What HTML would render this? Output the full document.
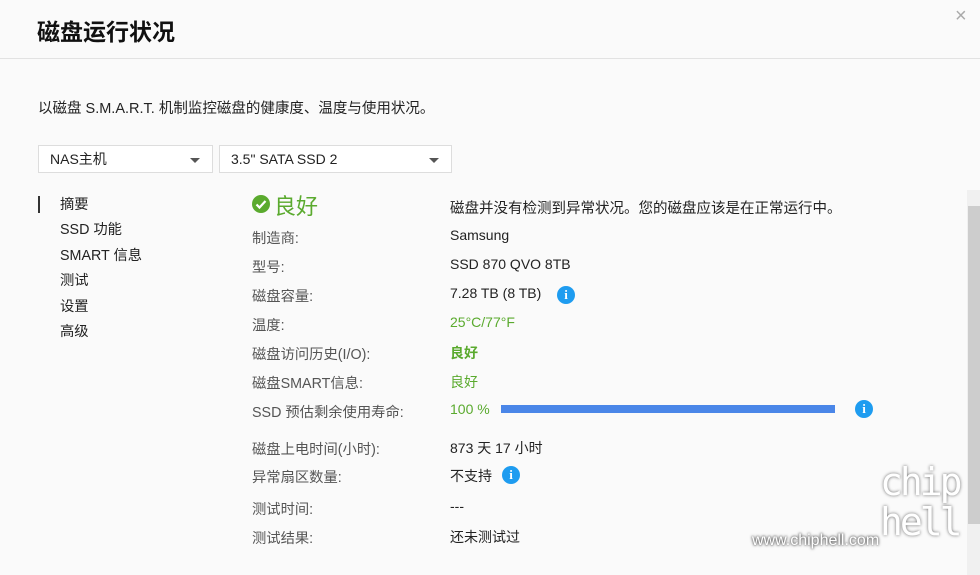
<!DOCTYPE html><html><head><meta charset="utf-8"><style>
body{margin:0;width:980px;height:575px;background:#fafafa;font-family:"Liberation Sans","Noto Sans CJK SC",sans-serif;position:relative;overflow:hidden;color:#222}
.a{position:absolute;white-space:nowrap}
.l{left:252px;font-size:14.3px;color:#555}
.v{left:450px;font-size:14px;color:#222}
.g{color:#5aaa2e}
.i{position:absolute;width:18px;height:18px;border-radius:50%;background:#1e9cf0;color:#fff;font:bold 13px/18px "Liberation Serif",serif;text-align:center}
.sel{position:absolute;top:145px;height:28px;background:#fff;border:1px solid #ddd;box-sizing:border-box;font-size:14px;line-height:27px;padding-left:11px}
.sel:after{content:"";position:absolute;right:12px;top:12px;border:5px solid transparent;border-top:5px solid #555;border-bottom:0}
.n{left:60px;font-size:14.3px;line-height:20px}
</style></head><body>
<div class="a" style="left:37px;top:13px;font-size:23px;font-weight:bold;color:#111">磁盘运行状况</div>
<div class="a" style="left:955px;top:5px;font-size:20px;color:#aaa">×</div>
<div class="a" style="left:0;top:58px;width:980px;height:1px;background:#e2e2e2"></div>
<div class="a" style="left:38px;top:97px;font-size:14.5px">以磁盘 S.M.A.R.T. 机制监控磁盘的健康度、温度与使用状况。</div>
<div class="sel" style="left:38px;width:175px">NAS主机</div>
<div class="sel" style="left:219px;width:233px">3.5" SATA SSD 2</div>
<div class="a" style="left:38px;top:196px;width:2px;height:17px;background:#333"></div>
<div class="a n" style="top:195px">摘要</div>
<div class="a n" style="top:220px">SSD 功能</div>
<div class="a n" style="top:246px">SMART 信息</div>
<div class="a n" style="top:271px">测试</div>
<div class="a n" style="top:297px">设置</div>
<div class="a n" style="top:322px">高级</div>
<div class="a" style="left:252px;top:195px;width:18px;height:18px;border-radius:50%;background:#5aaa2e"></div>
<svg class="a" style="left:252px;top:195px" width="18" height="18"><path d="M4.5 9.5l3 3 6-6.5" stroke="#fff" stroke-width="2.2" fill="none"/></svg>
<div class="a g" style="left:274px;top:189px;font-size:22px">良好</div>
<div class="a v" style="top:197px;font-size:14.5px">磁盘并没有检测到异常状况。您的磁盘应该是在正常运行中。</div>
<div class="a l" style="top:227px">制造商:</div><div class="a v" style="top:227px">Samsung</div>
<div class="a l" style="top:256px">型号:</div><div class="a v" style="top:256px">SSD 870 QVO 8TB</div>
<div class="a l" style="top:285px">磁盘容量:</div><div class="a v" style="top:285px">7.28 TB (8 TB)</div><div class="i" style="left:557px;top:286px">i</div>
<div class="a l" style="top:314px">温度:</div><div class="a v g" style="top:314px">25°C/77°F</div>
<div class="a l" style="top:343px">磁盘访问历史(I/O):</div><div class="a v g" style="top:343px;font-weight:bold">良好</div>
<div class="a l" style="top:372px">磁盘SMART信息:</div><div class="a v g" style="top:372px">良好</div>
<div class="a l" style="top:401px">SSD 预估剩余使用寿命:</div><div class="a v g" style="top:401px">100 %</div>
<div class="a" style="left:501px;top:405px;width:334px;height:8px;background:#4a86e8"></div><div class="i" style="left:855px;top:400px">i</div>
<div class="a l" style="top:438px">磁盘上电时间(小时):</div><div class="a v" style="top:438px">873 天 17 小时</div>
<div class="a l" style="top:466px">异常扇区数量:</div><div class="a v" style="top:466px">不支持</div><div class="i" style="left:502px;top:466px">i</div>
<div class="a l" style="top:498px">测试时间:</div><div class="a v" style="top:498px">---</div>
<div class="a l" style="top:527px">测试结果:</div><div class="a v" style="top:527px">还未测试过</div>
<div class="a" style="left:967px;top:190px;width:13px;height:385px;background:#f0f0f0"></div>
<div class="a" style="left:968px;top:206px;width:12px;height:318px;background:#cdcdcd"></div>
<div class="a" style="left:752px;top:532px;font-size:16px;color:#fff;text-shadow:0 0 3px #555,0 0 2px #555">www.chiphell.com</div>
<div class="a" style="left:880px;top:462px;font-size:38px;line-height:40px;letter-spacing:-3px;color:#fff;text-shadow:0 0 3px #666;font-family:'DejaVu Sans Mono',monospace;width:90px;white-space:normal">chip<br>hell</div>
</body></html>
